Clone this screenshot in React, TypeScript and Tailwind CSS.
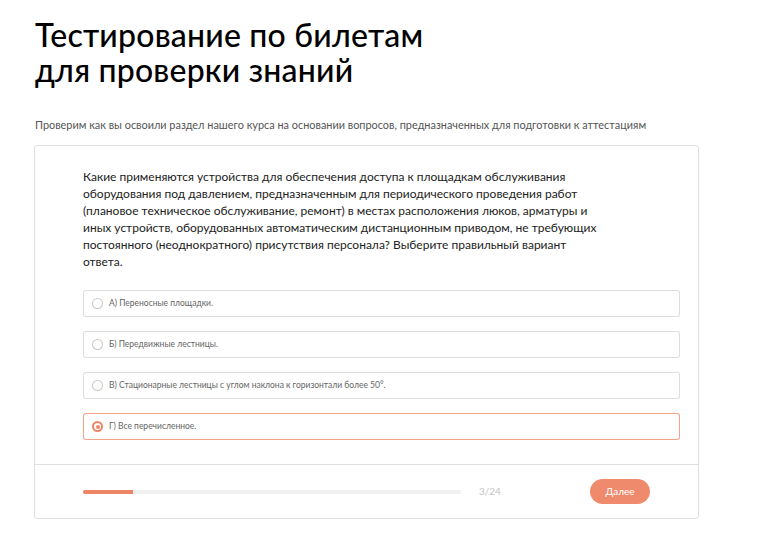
import React, { useState } from 'react';

const options = [
  'А) Переносные площадки.',
  'Б) Передвижные лестницы.',
  'В) Стационарные лестницы с углом наклона к горизонтали более 50°.',
  'Г) Все перечисленное.',
];

const App: React.FC = () => {
  const [selected, setSelected] = useState(3);

  return (
    <div className="min-h-screen bg-white font-['Lato','Liberation_Sans',sans-serif] text-[#111]">
      <div className="pl-[35px] pr-[70px] pt-[17px]">
        <h1 className="text-[32px] leading-[35px] font-medium tracking-[0.2px] text-black">
          Тестирование по билетам
          <br />
          для проверки знаний
        </h1>
        <p className="mt-[31px] text-[10.9px] leading-[14px] text-[#555]">
          Проверим как вы освоили раздел нашего курса на основании вопросов, предназначенных для подготовки к аттестациям
        </p>
      </div>

      <div className="ml-[34px] mt-[13px] w-[665px] rounded-[3px] border border-[#e0e0e0]">
        <div className="pl-[48px] pr-[18px] pt-[22px] pb-[24px]">
          <p className="text-[12px] leading-[17px] text-[#222]">
            Какие применяются устройства для обеспечения доступа к площадкам обслуживания
            <br />
            оборудования под давлением, предназначенным для периодического проведения работ
            <br />
            (плановое техническое обслуживание, ремонт) в местах расположения люков, арматуры и
            <br />
            иных устройств, оборудованных автоматическим дистанционным приводом, не требующих
            <br />
            постоянного (неоднократного) присутствия персонала? Выберите правильный вариант
            <br />
            ответа.
          </p>

          <div className="mt-[20px] flex flex-col gap-[14px]">
            {options.map((opt, i) => {
              const active = i === selected;
              return (
                // 1px frame drawn by the wrapper's background
                <div
                  key={opt}
                  onClick={() => setSelected(i)}
                  className={active ? 'cursor-pointer rounded-[3px] bg-[#f4a38b] p-px' : 'cursor-pointer rounded-[3px] bg-[#dedede] p-px'}
                >
                  <div className="flex h-[25px] items-center gap-[6px] rounded-[2px] bg-white pl-[8px]">
                    {active ? (
                      <span className="flex h-[11px] w-[11px] items-center justify-center rounded-full bg-[#ee8666]">
                        <span className="flex h-[7px] w-[7px] items-center justify-center rounded-full bg-white">
                          <span className="h-[4px] w-[4px] rounded-full bg-[#ee8666]" />
                        </span>
                      </span>
                    ) : (
                      <span className="flex h-[11px] w-[11px] items-center justify-center rounded-full bg-[#c8c8c8]">
                        <span className="h-[9px] w-[9px] rounded-full bg-white" />
                      </span>
                    )}
                    <span className="text-[8.5px] text-[#666]">{opt}</span>
                  </div>
                </div>
              );
            })}
          </div>
        </div>

        <div className="flex h-[54px] items-center border-t border-[#e0e0e0] pl-[48px] pr-[48px]">
          <div className="h-[4px] w-[378px] overflow-hidden rounded-full bg-[#f0f0f0]">
            <div className="h-full w-[50px] bg-[#ee8666]" />
          </div>
          <span className="ml-[18px] text-[10px] text-[#c4c4c4]">3/24</span>
          <button className="ml-auto h-[25px] w-[60px] rounded-full bg-[#f08a6c] text-[10px] text-white outline-none">
            Далее
          </button>
        </div>
      </div>
    </div>
  );
};

export default App;
